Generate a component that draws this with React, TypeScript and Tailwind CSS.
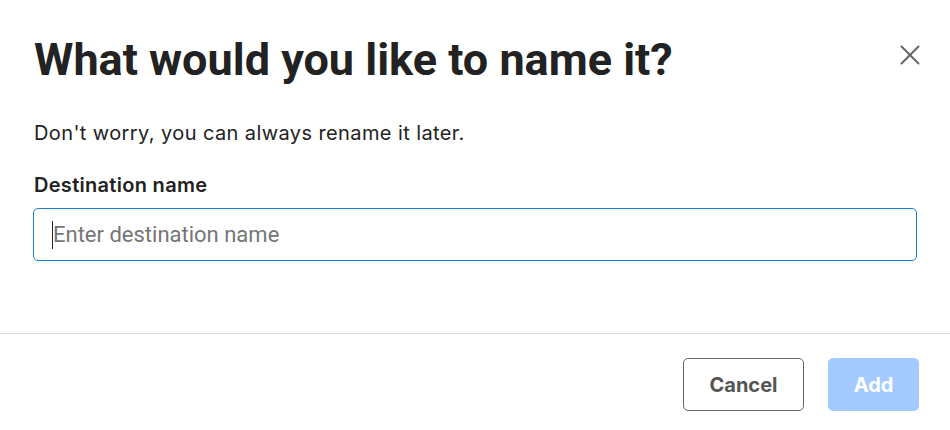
import { X } from "lucide-react";

export default function App() {
  return (
    <div className="w-[950px] h-[430px] bg-white flex flex-col">
      <div className="flex items-start justify-between pl-[34px] pr-[23px] pt-[32px]">
        <h1 className="font-['Roboto',sans-serif] font-bold text-[45px] leading-[56px] text-[#222222]">
          What would you like to name it?
        </h1>
        <button className="mt-[6px] text-[#666666]">
          <X size={34} strokeWidth={1.4} />
        </button>
      </div>
      <div className="px-[33px] font-['Inter',sans-serif]">
        <p className="mt-[33px] pl-px text-[20px] leading-[24px] tracking-[0.4px] text-[#222222]">
          Don't worry, you can always rename it later.
        </p>
        <label className="block mt-[28px] pl-px text-[20px] leading-[24px] tracking-[0.3px] font-semibold text-[#222222]">
          Destination name
        </label>
        <div className="mt-[11px] h-[53px] rounded-[5px] border border-[#1a82d4] flex items-center pl-[18px]">
          <span className="w-px h-[28px] bg-[#222222]" />
          <span className="font-['Roboto',sans-serif] text-[22px] text-[#767676]">Enter destination name</span>
        </div>
      </div>
      <div className="mt-[72px] border-t border-[#d9d9d9]" />
      <div className="flex justify-end gap-[24px] pr-[31px] pt-[24px] font-['Inter',sans-serif]">
        <button className="w-[121px] h-[53px] rounded-[5px] border border-[#666666] text-[20px] font-bold text-[#555555]">
          Cancel
        </button>
        <button className="w-[91px] h-[53px] rounded-[5px] bg-[#a3cbff] text-[20px] font-bold text-white">
          Add
        </button>
      </div>
    </div>
  );
}
